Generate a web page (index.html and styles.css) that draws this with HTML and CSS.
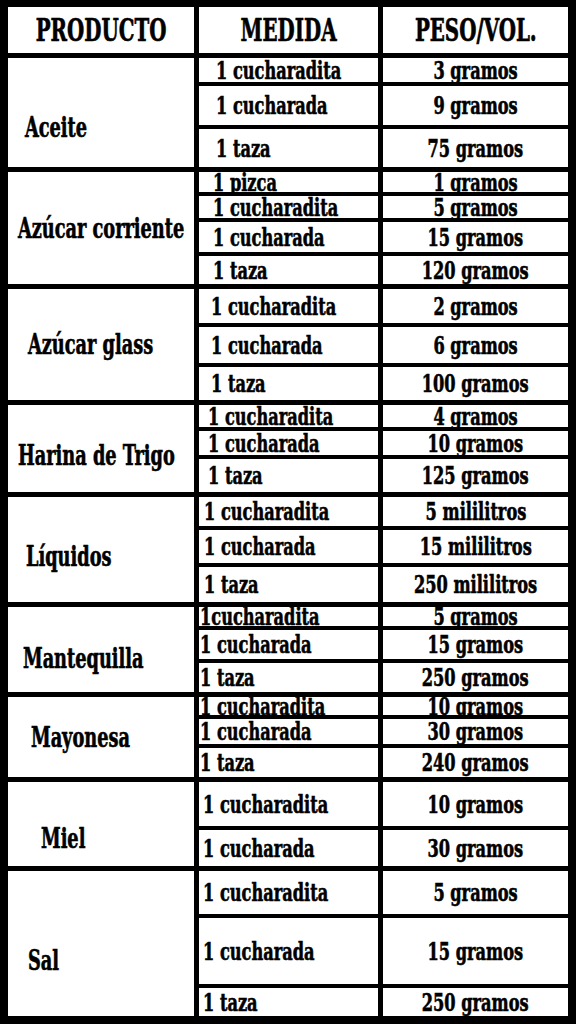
FILE: index.html
```html
<!DOCTYPE html>
<html lang="es">
<head>
<meta charset="utf-8">
<title>Equivalencias</title>
<link rel="stylesheet" href="styles.css">
</head>
<body>
<div class="table">
  <div class="head">
    <div class="cell hc"><span class="t">PRODUCTO</span></div>
    <div class="cell hc"><span class="t">MEDIDA</span></div>
    <div class="cell hc"><span class="t">PESO/VOL.</span></div>
  </div>

  <div class="group g-aceite">
    <div class="cell prod"><span class="t">Aceite</span></div>
    <div class="cell med"><span class="t">1 cucharadita</span></div><div class="cell val"><span class="t">3 gramos</span></div>
    <div class="cell med"><span class="t">1 cucharada</span></div><div class="cell val"><span class="t">9 gramos</span></div>
    <div class="cell med"><span class="t">1 taza</span></div><div class="cell val"><span class="t">75 gramos</span></div>
  </div>

  <div class="group g-azc">
    <div class="cell prod"><span class="t">Azúcar corriente</span></div>
    <div class="cell med"><span class="t">1 pizca</span></div><div class="cell val"><span class="t">1 gramos</span></div>
    <div class="cell med"><span class="t">1 cucharadita</span></div><div class="cell val"><span class="t">5 gramos</span></div>
    <div class="cell med"><span class="t">1 cucharada</span></div><div class="cell val"><span class="t">15 gramos</span></div>
    <div class="cell med"><span class="t">1 taza</span></div><div class="cell val"><span class="t">120 gramos</span></div>
  </div>

  <div class="group g-azg">
    <div class="cell prod"><span class="t">Azúcar glass</span></div>
    <div class="cell med"><span class="t">1 cucharadita</span></div><div class="cell val"><span class="t">2 gramos</span></div>
    <div class="cell med"><span class="t">1 cucharada</span></div><div class="cell val"><span class="t">6 gramos</span></div>
    <div class="cell med"><span class="t">1 taza</span></div><div class="cell val"><span class="t">100 gramos</span></div>
  </div>

  <div class="group g-har">
    <div class="cell prod"><span class="t">Harina de Trigo</span></div>
    <div class="cell med"><span class="t">1 cucharadita</span></div><div class="cell val"><span class="t">4 gramos</span></div>
    <div class="cell med"><span class="t">1 cucharada</span></div><div class="cell val"><span class="t">10 gramos</span></div>
    <div class="cell med"><span class="t">1 taza</span></div><div class="cell val"><span class="t">125 gramos</span></div>
  </div>

  <div class="group g-liq">
    <div class="cell prod"><span class="t">Líquidos</span></div>
    <div class="cell med"><span class="t">1 cucharadita</span></div><div class="cell val"><span class="t">5 mililitros</span></div>
    <div class="cell med"><span class="t">1 cucharada</span></div><div class="cell val"><span class="t">15 mililitros</span></div>
    <div class="cell med"><span class="t">1 taza</span></div><div class="cell val"><span class="t">250 mililitros</span></div>
  </div>

  <div class="group g-man">
    <div class="cell prod"><span class="t">Mantequilla</span></div>
    <div class="cell med"><span class="t">1cucharadita</span></div><div class="cell val"><span class="t">5 gramos</span></div>
    <div class="cell med"><span class="t">1 cucharada</span></div><div class="cell val"><span class="t">15 gramos</span></div>
    <div class="cell med"><span class="t">1 taza</span></div><div class="cell val"><span class="t">250 gramos</span></div>
  </div>

  <div class="group g-may">
    <div class="cell prod"><span class="t">Mayonesa</span></div>
    <div class="cell med"><span class="t">1 cucharadita</span></div><div class="cell val"><span class="t">10 gramos</span></div>
    <div class="cell med"><span class="t">1 cucharada</span></div><div class="cell val"><span class="t">30 gramos</span></div>
    <div class="cell med"><span class="t">1 taza</span></div><div class="cell val"><span class="t">240 gramos</span></div>
  </div>

  <div class="group g-miel">
    <div class="cell prod"><span class="t">Miel</span></div>
    <div class="cell med"><span class="t">1 cucharadita</span></div><div class="cell val"><span class="t">10 gramos</span></div>
    <div class="cell med"><span class="t">1 cucharada</span></div><div class="cell val"><span class="t">30 gramos</span></div>
  </div>

  <div class="group g-sal">
    <div class="cell prod"><span class="t">Sal</span></div>
    <div class="cell med"><span class="t">1 cucharadita</span></div><div class="cell val"><span class="t">5 gramos</span></div>
    <div class="cell med"><span class="t">1 cucharada</span></div><div class="cell val"><span class="t">15 gramos</span></div>
    <div class="cell med"><span class="t">1 taza</span></div><div class="cell val"><span class="t">250 gramos</span></div>
  </div>
</div>
</body>
</html>
```

FILE: styles.css
```css
html, body {
  margin: 0;
  padding: 0;
  background: #000;
}
body {
  width: 576px;
  height: 1024px;
  overflow: hidden;
  font-family: "DejaVu Serif", "Liberation Serif", serif;
  font-stretch: condensed;
  font-weight: bold;
  color: #000;
}
.table {
  display: flex;
  flex-direction: column;
  gap: 5px;
  padding: 7px 8px 8px 8px;
}
.head, .group {
  display: grid;
  grid-template-columns: 186px 179px 185px;
  column-gap: 5px;
  row-gap: 4px;
}
.head {
  height: 46px;
}
.cell {
  background: #fff;
  display: flex;
  align-items: center;
  overflow: hidden;
  white-space: nowrap;
  line-height: 1;
}
.t {
  display: inline-block;
  transform: scaleX(0.72);
  -webkit-text-stroke: 0.6px #000;
}
.hc {
  justify-content: center;
  font-size: 31px;
}
.hc .t { transform: scaleX(0.71); }
.prod {
  grid-column: 1;
  grid-row: 1 / -1;
  font-size: 27px;
  padding-left: 17px;
}
.prod .t { transform-origin: left center; transform: scaleX(0.73); }
.med {
  grid-column: 2;
  font-size: 25px;
  padding-left: 17px;
}
.med .t { transform-origin: left center; }
.val {
  grid-column: 3;
  justify-content: center;
  font-size: 25px;
}

.g-aceite { grid-template-rows: 24px 39px 38px; }
.g-aceite .prod { padding-top: 30px; }

.g-azc { grid-template-rows: 20px 22px 30px 28px; }
.g-azc .prod { padding-left: 10px; }
.g-azc .med { padding-left: 14px; }

.g-azg { grid-template-rows: 34px 36px 33px; }
.g-azg .prod { padding-left: 20px; }
.g-azg .med { padding-left: 12px; }

.g-har { grid-template-rows: 22px 24px 33px; }
.g-har .prod { padding-left: 10px; padding-top: 14px; }
.g-har .med { padding-left: 9px; }

.g-liq { grid-template-rows: 29px 33px 35px; }
.g-liq .prod { padding-left: 18px; padding-top: 14px; }
.g-liq .med { padding-left: 5px; }

.g-man { grid-template-rows: 19px 29px 29px; }
.g-man .prod { padding-left: 15px; padding-top: 18px; }
.g-man .med { padding-left: 1px; }

.g-may { grid-template-rows: 18px 25px 29px; }
.g-may .prod { padding-left: 23px; }
.g-may .med { padding-left: 1px; }

.g-miel { grid-template-rows: 44px 36px; }
.g-miel .prod { padding-left: 33px; padding-top: 28px; }
.g-miel .med { padding-left: 4px; }

.g-sal { grid-template-rows: 43px 66px 28px; }
.g-sal .prod { padding-left: 20px; padding-top: 34px; }
.g-sal .med { padding-left: 4px; }
```
